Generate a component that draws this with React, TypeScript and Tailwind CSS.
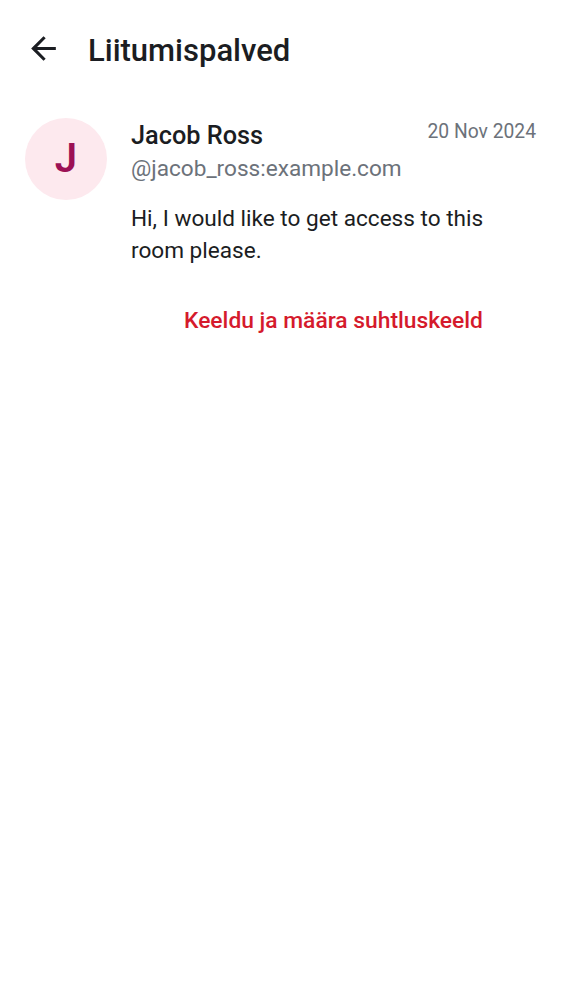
import React from "react";

const ArrowBack = () => (
  <svg width="37" height="37" viewBox="0 0 24 24" fill="none">
    <path d="M20 11H7.83l5.59-5.59L12 4l-8 8 8 8 1.41-1.41L7.83 13H20v-2z" fill="#1b1d22" />
  </svg>
);

const App = () => {
  return (
    <div
      className="w-[562px] h-[1000px] bg-white text-[#1b1d22]"
      style={{ fontFamily: "Roboto, 'Noto Sans', sans-serif" }}
    >
      <header className="flex items-center h-[100px] pl-[25px]">
        <button className="flex items-center justify-center w-[37px] h-[37px] -mt-[3px]">
          <ArrowBack />
        </button>
        <h1 className="ml-[26px] text-[31px] font-medium leading-none">Liitumispalved</h1>
      </header>

      <div className="flex pl-[25px] pr-[26px] pt-[18px]">
        <div className="w-[82px] h-[82px] shrink-0 rounded-full bg-[#fde9ee] flex items-center justify-center">
          <span className="text-[40px] leading-none font-semibold text-[#9c1155]">J</span>
        </div>
        <div className="flex-1 ml-[24px] pt-[2px]">
          <div className="flex items-start justify-between">
            <div className="text-[25.3px] font-medium leading-[32px]">Jacob Ross</div>
            <div className="text-[19.3px] leading-[28px] text-[#6c727a] -mt-[2px]">20 Nov 2024</div>
          </div>
          <div className="text-[22.6px] leading-[30px] text-[#6c727a] mt-[2px]">@jacob_ross:example.com</div>
          <p className="text-[22.6px] leading-[32px] mt-[19px]">
            Hi, I would like to get access to this room please.
          </p>
          <div className="flex justify-center mt-[39px]">
            <button className="text-[22.8px] font-medium text-[#d51a2c] leading-[30px]">
              Keeldu ja määra suhtluskeeld
            </button>
          </div>
        </div>
      </div>
    </div>
  );
};

export default App;
